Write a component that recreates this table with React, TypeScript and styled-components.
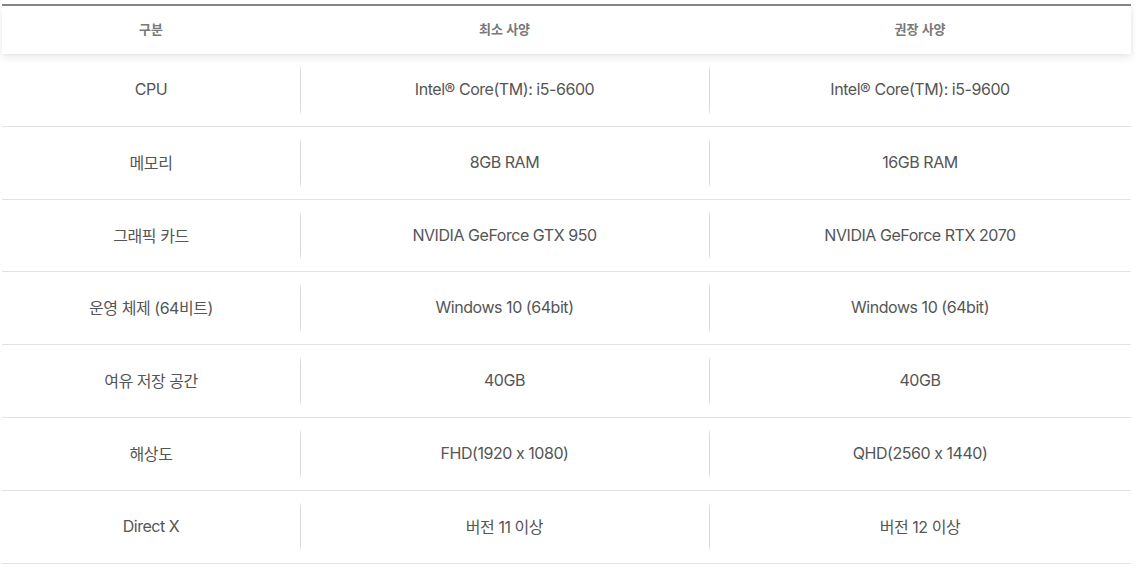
import React from "react";
import styled, { createGlobalStyle } from "styled-components";

const Global = createGlobalStyle`
  html, body { margin: 0; padding: 0; background: #ffffff; }
  body { font-family: Inter, "Noto Sans CJK KR", "Noto Sans", sans-serif; }
`;

const Page = styled.div`
  padding: 4px 0 0 2px;
  width: 1129px;
`;

const Table = styled.div`
  border-top: 2px solid #8a8a8a;
`;

const HeaderRow = styled.div`
  display: grid;
  grid-template-columns: 298px 409px 1fr;
  height: 48px;
  background: #ffffff;
  box-shadow: 0 4px 8px rgba(0, 0, 0, 0.08), 1px 0 4px rgba(0, 0, 0, 0.05);
  position: relative;
  z-index: 1;
`;

const HeaderCell = styled.div`
  display: flex;
  align-items: center;
  justify-content: center;
  font-size: 13px;
  font-weight: 600;
  color: #787878;
  padding-bottom: 4px;
`;

const Row = styled.div`
  display: grid;
  grid-template-columns: 298px 409px 1fr;
  height: 71.83px;
  border-bottom: 1px solid #e2e2e2;
`;

const Cell = styled.div<{ $divider?: boolean }>`
  position: relative;
  display: flex;
  align-items: center;
  justify-content: center;
  font-size: 16px;
  color: #555555;
  letter-spacing: -0.45px;
  padding-bottom: 2px;
  &::before {
    content: "";
    display: ${(p) => (p.$divider ? "block" : "none")};
    position: absolute;
    left: 0;
    top: 12px;
    bottom: 12px;
    width: 1px;
    background: linear-gradient(
      to bottom,
      rgba(215, 215, 215, 0.3),
      #d8d8d8 12%,
      #d8d8d8 88%,
      rgba(215, 215, 215, 0.3)
    );
  }
`;

const rows: [string, string, string][] = [
  ["CPU", "Intel® Core(TM): i5-6600", "Intel® Core(TM): i5-9600"],
  ["메모리", "8GB RAM", "16GB RAM"],
  ["그래픽 카드", "NVIDIA GeForce GTX 950", "NVIDIA GeForce RTX 2070"],
  ["운영 체제 (64비트)", "Windows 10 (64bit)", "Windows 10 (64bit)"],
  ["여유 저장 공간", "40GB", "40GB"],
  ["해상도", "FHD(1920 x 1080)", "QHD(2560 x 1440)"],
  ["Direct X", "버전 11 이상", "버전 12 이상"],
];

export default function App() {
  return (
    <>
      <Global />
      <Page>
        <Table>
          <HeaderRow>
            <HeaderCell>구분</HeaderCell>
            <HeaderCell>최소 사양</HeaderCell>
            <HeaderCell>권장 사양</HeaderCell>
          </HeaderRow>
          {rows.map((r, i) => (
            <Row key={i}>
              <Cell>{r[0]}</Cell>
              <Cell $divider>{r[1]}</Cell>
              <Cell $divider>{r[2]}</Cell>
            </Row>
          ))}
        </Table>
      </Page>
    </>
  );
}
